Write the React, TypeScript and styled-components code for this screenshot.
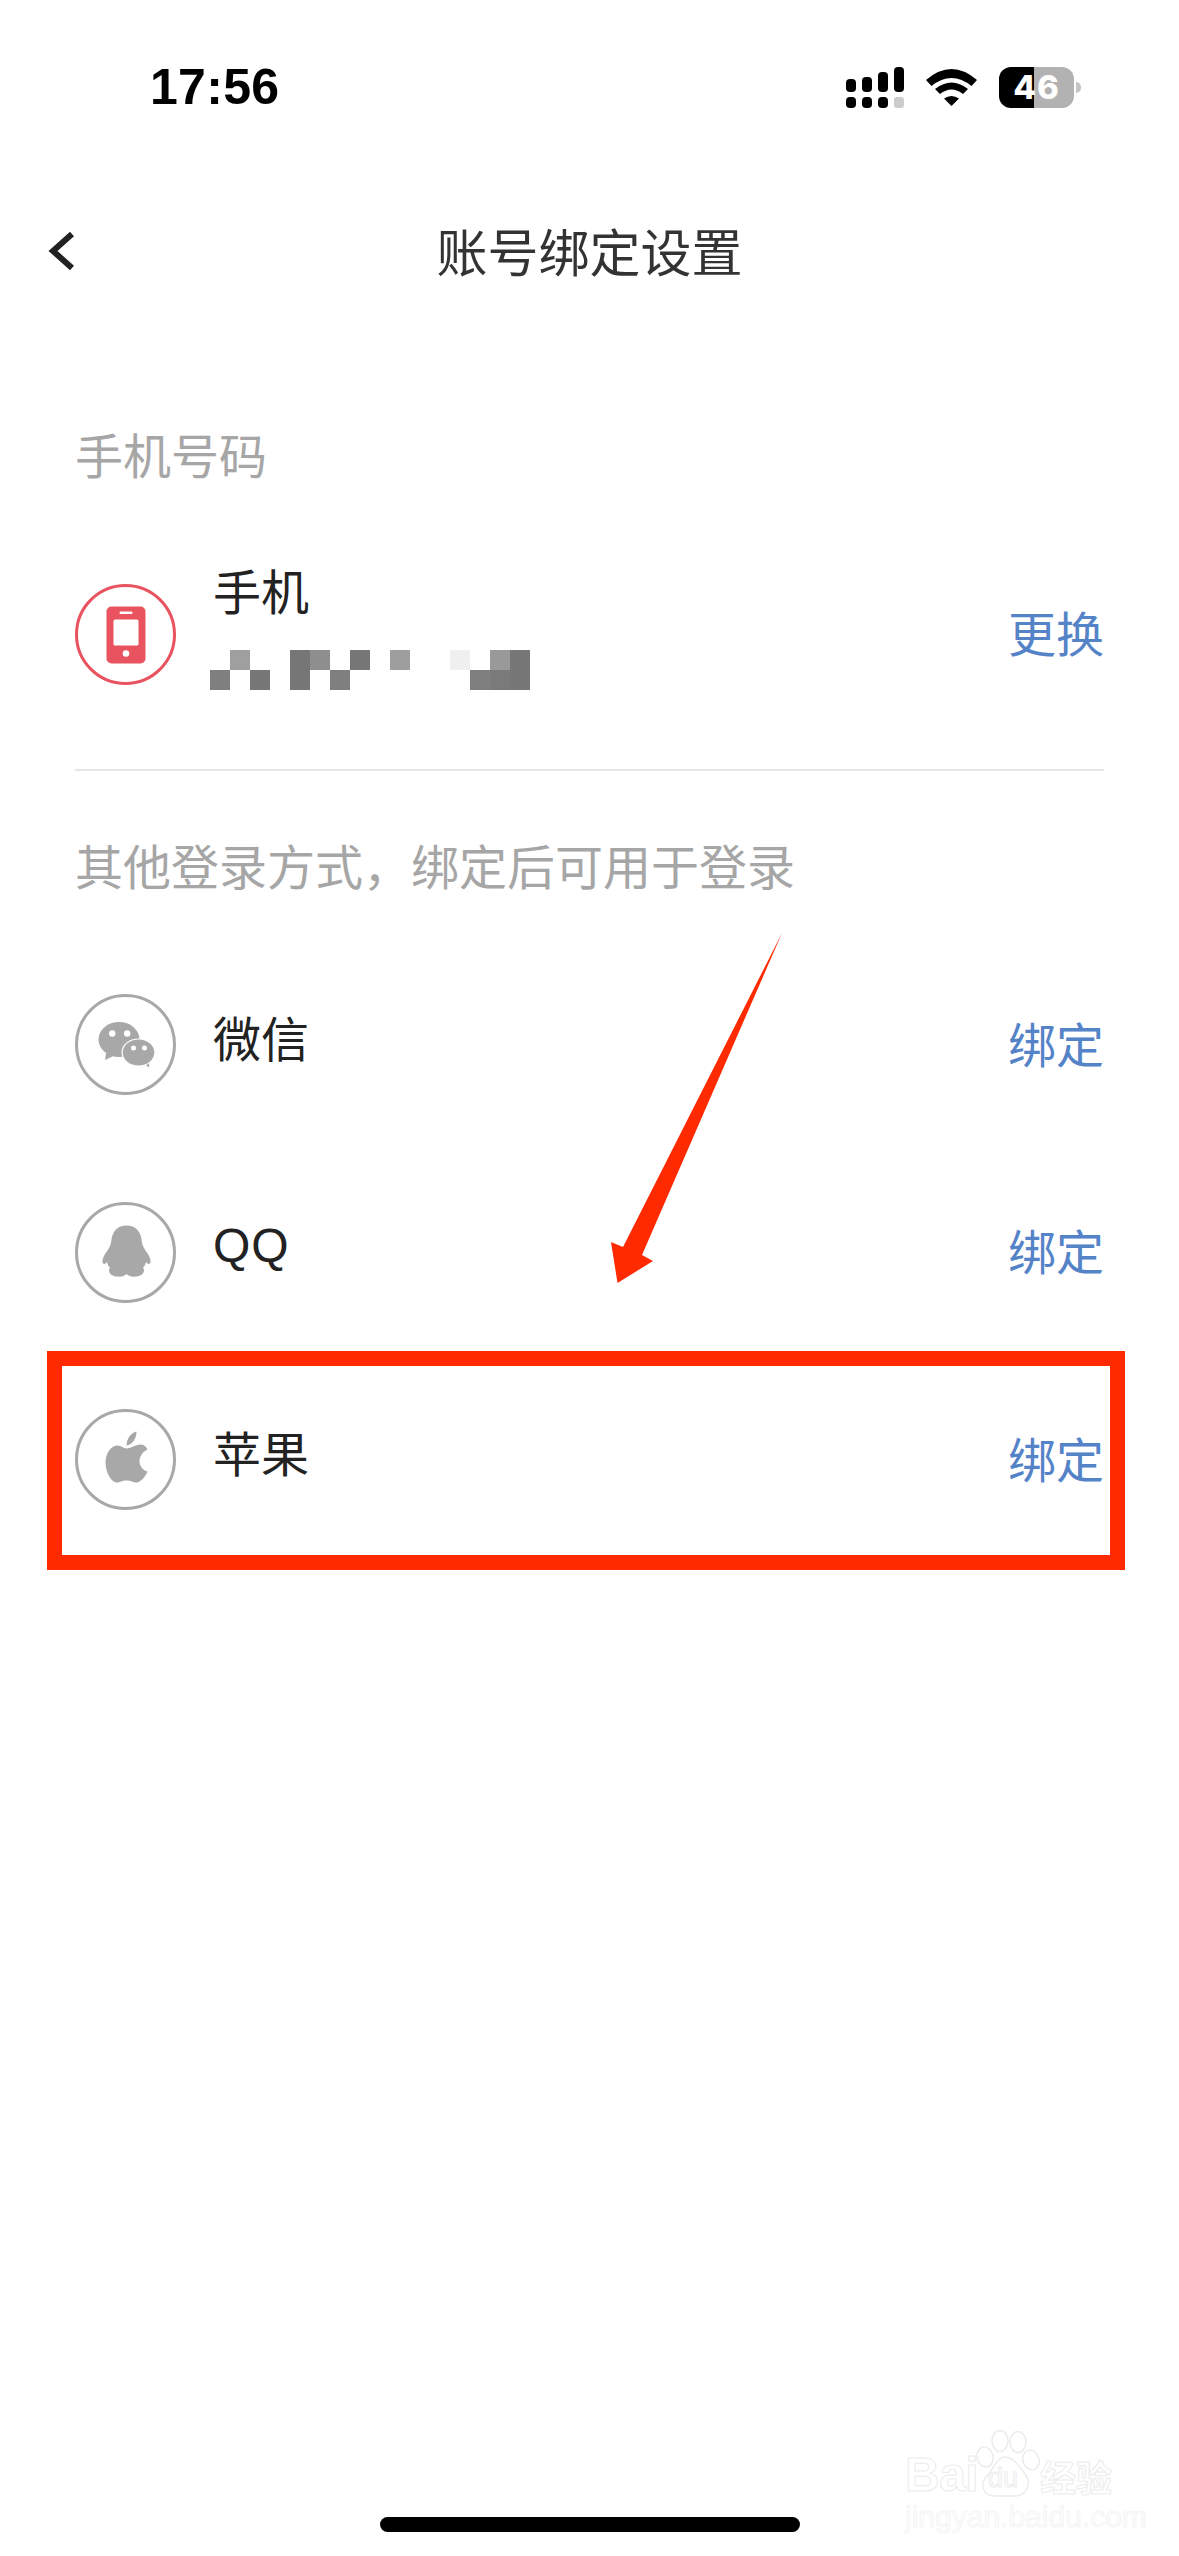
import React from "react";
import styled, { createGlobalStyle } from "styled-components";

const CJK = `"Noto Sans CJK SC", "Noto Sans", sans-serif`;

const Global = createGlobalStyle`
  html, body { margin: 0; padding: 0; background: #fff; }
  * { box-sizing: border-box; }
`;

const Page = styled.div`
  position: relative;
  width: 1179px;
  height: 2556px;
  overflow: hidden;
  background: #fff;
  font-family: ${CJK};
  display: flow-root;
`;

const StatusBar = styled.div`
  display: flex;
  justify-content: space-between;
  align-items: center;
  height: 42px;
  margin-top: 66px;
  padding: 0 105px 0 150px;
`;

const Time = styled.div`
  font-family: "Liberation Sans", sans-serif;
  font-weight: 700;
  font-size: 50px;
  line-height: 42px;
  color: #000;
  letter-spacing: 0.3px;
`;

const StatusIcons = styled.div`
  display: flex;
  align-items: center;
  gap: 22px;
`;

const Battery = styled.div`
  position: relative;
  width: 75px;
  height: 41px;
  border-radius: 12px;
  background: linear-gradient(90deg, #000 0 35px, #b2b2b2 35px 100%);
  color: #fff;
  font-family: Inter, "Liberation Sans", sans-serif;
  font-weight: 800;
  font-size: 33px;
  line-height: 41px;
  text-align: center;
  letter-spacing: 1px;
  &::after {
    content: "";
    position: absolute;
    right: -7px;
    top: 15px;
    width: 5px;
    height: 11px;
    border-radius: 0 6px 6px 0;
    background: #c4c4c4;
  }
`;

const Nav = styled.div`
  display: grid;
  grid-template-columns: 1fr auto 1fr;
  align-items: center;
  height: 100px;
  margin-top: 93px;
  padding: 0 48px;
`;

const Title = styled.div`
  font-size: 51px;
  line-height: 60px;
  color: #333;
  padding-bottom: 3px;
`;

const Content = styled.div`
  padding: 122px 75px 0;
`;

const SectionLabel = styled.div<{ $top?: number }>`
  font-size: 48px;
  line-height: 60px;
  color: #a6a6a6;
  margin-top: ${(p) => p.$top ?? 0}px;
`;

const Row = styled.div<{ $top?: number }>`
  display: flex;
  align-items: center;
  height: 100px;
  margin-top: ${(p) => p.$top ?? 0}px;
`;

const IconCircle = styled.div<{ $color: string }>`
  flex: none;
  width: 101px;
  height: 101px;
  border-radius: 50%;
  border: 3px solid ${(p) => p.$color};
  color: ${(p) => p.$color};
  svg { display: block; width: 95px; height: 95px; }
`;

const Info = styled.div<{ $lift: number }>`
  flex: 1;
  margin-left: 37px;
  padding-bottom: ${(p) => p.$lift}px;
`;

const Name = styled.div`
  font-size: 48px;
  line-height: 60px;
  color: #222;
`;

const LatinName = styled(Name)`
  font-family: "Liberation Sans", sans-serif;
  letter-spacing: 1px;
`;

const Mosaic = styled.div`
  display: grid;
  grid-template-columns: repeat(16, 20px);
  grid-auto-rows: 20px;
  margin-top: 31px;
  margin-left: -3px;
`;

const Cell = styled.div<{ $shade: string }>`
  background: ${(p) => p.$shade};
`;

const Action = styled.div`
  flex: none;
  font-size: 48px;
  line-height: 60px;
  color: #5583c8;
  padding-bottom: 6px;
`;

const Divider = styled.div`
  height: 2px;
  margin-top: 85px;
  background: #e6e6e6;
`;

const List = styled.div`
  display: flex;
  flex-direction: column;
  gap: 107.5px;
  margin-top: 100.5px;
`;

const RedBox = styled.div`
  position: absolute;
  left: 47px;
  top: 1351px;
  width: 1078px;
  height: 219px;
  border: 15px solid #ff2a00;
`;

const Arrow = styled.svg`
  position: absolute;
  left: 600px;
  top: 925px;
`;

const HomeBar = styled.div`
  position: absolute;
  left: 380px;
  top: 2517px;
  width: 420px;
  height: 15px;
  border-radius: 8px;
  background: #000;
`;

const Watermark = styled.div`
  position: absolute;
  left: 905px;
  top: 2430px;
  width: 215px;
  color: #fff;
  -webkit-text-stroke: 1px #ececec;
`;

const MarkTop = styled.div`
  display: flex;
  align-items: flex-end;
  height: 67px;
`;

const MarkBai = styled.span`
  font-family: "Liberation Sans", sans-serif;
  font-weight: 700;
  font-size: 48px;
  line-height: 44px;
  width: 70px;
  letter-spacing: -0.5px;
`;

const Paw = styled.div`
  position: relative;
  width: 65px;
  height: 67px;
  flex: none;
  svg { display: block; }
`;

const MarkDu = styled.span`
  position: absolute;
  left: 13px;
  bottom: 4px;
  font-family: "Liberation Sans", sans-serif;
  font-size: 27px;
  line-height: 30px;
`;

const MarkCn = styled.span`
  font-size: 36px;
  line-height: 42px;
  font-weight: 700;
  white-space: nowrap;
`;

const MarkUrl = styled.div`
  font-family: "Liberation Sans", sans-serif;
  font-size: 30px;
  line-height: 34px;
  white-space: nowrap;
  margin-top: 3px;
  color: #fdfdfd;
  -webkit-text-stroke: 0.6px #f0f0f0;
`;

const Signal = () => (
  <svg width="58" height="41" viewBox="0 0 58 41">
    <g fill="#000">
      <rect x="0" y="12" width="10" height="13" rx="4" />
      <rect x="16" y="10" width="10" height="15" rx="4" />
      <rect x="32" y="5" width="10" height="20" rx="4" />
      <rect x="48" y="0" width="10" height="25" rx="4" />
      <rect x="0" y="30" width="10" height="11" rx="4" />
      <rect x="16" y="30" width="10" height="11" rx="4" />
      <rect x="32" y="30" width="10" height="11" rx="4" />
    </g>
    <rect x="48" y="30" width="10" height="11" rx="3" fill="#cccccc" />
  </svg>
);

const Wifi = () => (
  <svg width="51" height="37" viewBox="0 0 51 37" fill="#000">
    <path d="M0 11Q25.500-11 51 11L45.500 17Q25.500 1 5.500 17Z" />
    <path d="M9 20Q25.500 7 42 20L37 25Q25.500 16 14 25Z" />
    <path d="M18 29.500Q25.500 24.500 33 29.500L25.500 37Z" />
  </svg>
);

const Chevron = () => (
  <svg width="30" height="40" viewBox="0 0 30 40" fill="none" stroke="#222" strokeWidth="6">
    <polyline points="24,3 5,20 24,37" />
  </svg>
);

const VIEW = "7.5 7.5 95 95";

const PhoneGlyph = () => (
  <svg viewBox={VIEW}>
    <rect x="36" y="27" width="39" height="57" rx="5" fill="currentColor" />
    <rect x="43" y="40" width="25" height="26" rx="1.500" fill="#fff" />
    <rect x="49" y="32" width="13" height="2.500" rx="1.200" fill="#fff" />
    <circle cx="55.500" cy="74" r="3.300" fill="#fff" />
  </svg>
);

const WechatGlyph = () => (
  <svg viewBox={VIEW}>
    <g fill="currentColor">
      <ellipse cx="48.500" cy="50" rx="20.500" ry="17.500" />
      <path d="M36 61L34.500 70.500L46 65Z" />
      <path d="M72 73L78.500 78L79 70Z" />
    </g>
    <ellipse cx="68" cy="63" rx="17" ry="14" fill="#fff" />
    <ellipse cx="68" cy="63" rx="15.800" ry="13" fill="currentColor" />
    <g fill="#fff">
      <circle cx="41.700" cy="44" r="3.200" />
      <circle cx="56.700" cy="44" r="3.200" />
      <circle cx="63" cy="58.500" r="2.500" />
      <circle cx="74" cy="58.500" r="2.500" />
    </g>
  </svg>
);

const QQGlyph = () => (
  <svg viewBox={VIEW}>
    <path
      fill="currentColor"
      d="M56 28C65 28 70 34 71 42C71.500 47 73 50 75 53C78 57 80.500 61 80 65C79.500 67 77 67 75.500 64.500C75 67 74 69 72.500 70C74.500 72 74 78 66 79C61 79.500 58 78.500 56 76.500C54 78.500 51 79.500 46 79C38 78 37.500 72 39.500 70C38 69 37 67 36.500 64.500C35 67 32.500 67 32 65C31.500 61 34 57 37 53C39 50 40.500 47 41 42C42 34 47 28 56 28Z"
    />
  </svg>
);

const AppleGlyph = () => (
  <svg viewBox={VIEW}>
    <g fill="currentColor">
      <path d="M56 44C60 44 65 40 70 40C73 40 76 42 77 45C71 48 69 53 69 57C69 62 73 66 77 67C75 72 70 78 66 78C62 78 61 76 56 76C51 76 50 78 46 78C41 78 35 68 35 58C35 48 41 41 47 41C51 41 53 44 56 44Z" />
      <path d="M56 41C56 34 61 28 66 27C66 34 62 40 56 41Z" />
    </g>
  </svg>
);

const cells: [number, number, string][] = [
  [1, 1, "#9f9f9f"], [1, 4, "#767676"], [1, 5, "#8e8e8e"], [1, 7, "#767676"], [1, 9, "#9e9e9e"],
  [1, 12, "#f0f0f0"], [1, 14, "#999999"], [1, 15, "#777777"],
  [2, 0, "#7f7f7f"], [2, 2, "#777777"], [2, 4, "#777777"], [2, 6, "#7f7f7f"], [2, 13, "#7f7f7f"],
  [2, 14, "#7a7a7a"], [2, 15, "#777777"],
];

const mosaic = [1, 2].flatMap((r) =>
  Array.from({ length: 16 }, (_, c) => {
    const hit = cells.find((x) => x[0] === r && x[1] === c);
    return { key: `${r}-${c}`, shade: hit ? hit[2] : "transparent" };
  })
);

const GRAY = "#a8a8a8";

export default function App() {
  return (
    <Page>
      <Global />
      <StatusBar>
        <Time>17:56</Time>
        <StatusIcons>
          <Signal />
          <Wifi />
          <Battery>46</Battery>
        </StatusIcons>
      </StatusBar>
      <Nav>
        <Chevron />
        <Title>账号绑定设置</Title>
      </Nav>
      <Content>
        <SectionLabel>手机号码</SectionLabel>
        <Row $top={101}>
          <IconCircle $color="#e8535f">
            <PhoneGlyph />
          </IconCircle>
          <Info $lift={19}>
            <Name>手机</Name>
            <Mosaic>
              {mosaic.map((m) => (
                <Cell key={m.key} $shade={m.shade} />
              ))}
            </Mosaic>
          </Info>
          <Action>更换</Action>
        </Row>
        <Divider />
        <SectionLabel $top={63}>其他登录方式，绑定后可用于登录</SectionLabel>
        <List>
          <Row>
            <IconCircle $color={GRAY}>
              <WechatGlyph />
            </IconCircle>
            <Info $lift={18}>
              <Name>微信</Name>
            </Info>
            <Action>绑定</Action>
          </Row>
          <Row>
            <IconCircle $color={GRAY}>
              <QQGlyph />
            </IconCircle>
            <Info $lift={12}>
              <LatinName>QQ</LatinName>
            </Info>
            <Action>绑定</Action>
          </Row>
          <Row>
            <IconCircle $color={GRAY}>
              <AppleGlyph />
            </IconCircle>
            <Info $lift={18}>
              <Name>苹果</Name>
            </Info>
            <Action>绑定</Action>
          </Row>
        </List>
      </Content>
      <Arrow width="200" height="370" viewBox="0 0 200 370">
        <polygon points="182,8 42,330 53,336 17.500,358 11,317 23,322" fill="#ff2a00" />
      </Arrow>
      <RedBox />
      <Watermark>
        <MarkTop>
          <MarkBai>Bai</MarkBai>
          <Paw>
            <svg width="65" height="67" viewBox="0 0 65 67" fill="#fff" stroke="#ececec" strokeWidth="1.500">
              <ellipse cx="10" cy="27" rx="8" ry="10" transform="rotate(-15 10 27)" />
              <ellipse cx="25" cy="11" rx="8" ry="10.500" />
              <ellipse cx="43" cy="12" rx="8" ry="10.500" />
              <ellipse cx="56" cy="30" rx="8" ry="10" transform="rotate(-20 56 30)" />
              <path d="M30 27C38 27 44 36 50 44C57 52 52 66 40 66C34 66 26 66 20 66C8 66 4 54 12 46C18 40 22 27 30 27Z" />
            </svg>
            <MarkDu>du</MarkDu>
          </Paw>
          <MarkCn>经验</MarkCn>
        </MarkTop>
        <MarkUrl>jingyan.baidu.com</MarkUrl>
      </Watermark>
      <HomeBar />
    </Page>
  );
}
